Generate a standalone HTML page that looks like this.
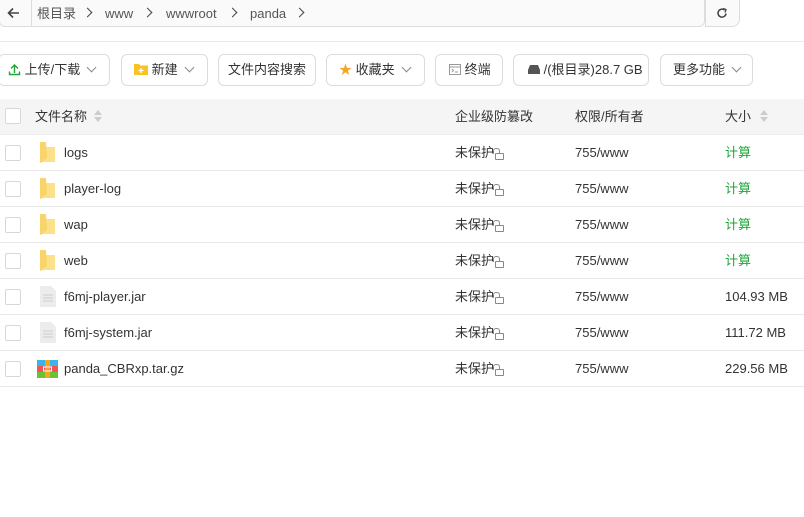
<!DOCTYPE html>
<html><head><meta charset="utf-8"><style>
*{box-sizing:border-box;margin:0;padding:0}
body{width:804px;height:517px;background:#fff;font-family:"Liberation Sans","Noto Sans CJK SC",sans-serif;font-size:13px;color:#333;position:relative;overflow:hidden}
.abs{position:absolute}
.bc{left:-1px;top:0;width:706px;height:27px;border:1px solid #dcdcdc;border-top:none;border-radius:0 0 6px 6px;background:#fafafa}
.rf{left:705px;top:0;width:35px;height:27px;border:1px solid #dcdcdc;border-top:none;border-radius:0 0 8px 0;background:#fafafa}
.t{position:absolute;white-space:nowrap;line-height:36px;top:0}
.btn{position:absolute;top:54px;height:32px;border:1px solid #dcdcdc;border-radius:6px;background:#fff;font-size:13px;line-height:30px;white-space:nowrap}
.chev{display:inline-block;width:7px;height:7px;border-right:1.2px solid #888;border-bottom:1.2px solid #888;transform:rotate(45deg);margin-left:8px;position:relative;top:-3px}
.row{position:absolute;left:0;width:804px;height:36px;border-bottom:1px solid #e8e8e8}
.cb{position:absolute;left:5px;top:10px;width:16px;height:16px;border:1px solid #d8d8d8;border-radius:2px;background:#fff}
.crumb{position:absolute;top:0;line-height:27px;font-size:13px;color:#555}
.gt{position:absolute;top:9px;width:7px;height:7px;border-right:1.5px solid #444;border-top:1.5px solid #444;transform:rotate(45deg)}
.lock{display:inline-block;width:9px;height:7px;border:1px solid #888;border-radius:1px;position:relative;top:3px;margin-left:1px}
.lock:before{content:"";position:absolute;left:-3px;top:-6px;width:5px;height:5px;border:1px solid #888;border-bottom:none;border-radius:3px 3px 0 0}
.sort{position:absolute;width:0;height:0;border-left:4px solid transparent;border-right:4px solid transparent}
</style></head><body>
<div class="abs bc"></div>
<div class="abs rf"></div>
<div class="abs" style="left:31px;top:0;width:1px;height:27px;background:#dcdcdc"></div>
<svg class="abs" style="left:7px;top:7px" width="13" height="12" viewBox="0 0 13 12"><path d="M12 6H2M6 1.5L1.5 6 6 10.5" stroke="#444" stroke-width="1.6" fill="none"/></svg>
<span class="crumb" style="left:37px">根目录</span><div class="gt" style="left:84px"></div>
<span class="crumb" style="left:105px">www</span><div class="gt" style="left:144px"></div>
<span class="crumb" style="left:166px">wwwroot</span><div class="gt" style="left:229px"></div>
<span class="crumb" style="left:250px">panda</span><div class="gt" style="left:296px"></div>
<svg class="abs" style="left:716px;top:7px" width="12" height="12" viewBox="0 0 12 12"><path d="M10 6.5A4 4 0 1 1 8.5 3" stroke="#444" stroke-width="1.5" fill="none"/><path d="M7 1.5L10 2.5 9 5.5" stroke="#444" stroke-width="1.3" fill="none"/></svg>
<div class="abs" style="left:0;top:41px;width:804px;height:1px;background:#eaeaea"></div>

<div class="btn" style="left:-2px;width:112px;padding-left:9px"><svg width="13" height="13" viewBox="0 0 13 13" style="vertical-align:-2px"><path d="M6.5 10V2M3 5.5L6.5 2 10 5.5M1.5 8.5v3h10v-3" stroke="#20a53a" stroke-width="1.4" fill="none"/></svg> 上传/下载<span class="chev"></span></div>
<div class="btn" style="left:121px;width:87px;padding-left:12px"><svg width="14" height="12" viewBox="0 0 14 12" style="vertical-align:-1px"><path d="M0 1h5l1.5 1.5H14V12H0z" fill="#f7c325"/><path d="M7 5v5M4.5 7.5h5" stroke="#fff" stroke-width="1.3"/></svg> 新建<span class="chev"></span></div>
<div class="btn" style="left:218px;width:98px;text-align:center">文件内容搜索</div>
<div class="btn" style="left:326px;width:99px;padding-left:12px"><span style="color:#f5a623">★</span> 收藏夹<span class="chev"></span></div>
<div class="btn" style="left:435px;width:68px;padding-left:13px"><svg width="12" height="11" viewBox="0 0 12 11" style="vertical-align:-1px"><rect x=".5" y=".5" width="11" height="10" fill="none" stroke="#999"/><path d="M.5 3h11M3 5l1.5 1.5L3 8M6 8h3" stroke="#999" fill="none"/></svg> 终端</div>
<div class="btn" style="left:513px;width:136px;padding-left:14px"><svg width="12" height="9" viewBox="0 0 12 9" style="vertical-align:0"><path d="M2 0h8l2 5v4H0V5z" fill="#555"/></svg> /(根目录)28.7 GB</div>
<div class="btn" style="left:660px;width:93px;padding-left:12px">更多功能<span class="chev"></span></div>

<div class="abs" style="left:0;top:99px;width:804px;height:36px;background:#f5f5f5;border-bottom:1px solid #eee">
<div class="cb" style="top:9px"></div>
<span class="t" style="left:35px">文件名称</span>
<div class="sort" style="left:94px;top:11px;border-bottom:5px solid #ccc"></div><div class="sort" style="left:94px;top:18px;border-top:5px solid #ccc"></div>
<span class="t" style="left:455px">企业级防篡改</span>
<span class="t" style="left:575px">权限/所有者</span>
<span class="t" style="left:725px">大小</span>
<div class="sort" style="left:760px;top:11px;border-bottom:5px solid #ccc"></div><div class="sort" style="left:760px;top:18px;border-top:5px solid #ccc"></div>
</div>

<div class="row" style="top:135px"><div class="cb"></div><svg class="abs" style="left:39px;top:7px" width="17" height="21" viewBox="0 0 17 21"><path d="M1 0h6v5h9v15H3L1 21z" fill="#fde08a"/><path d="M1 0h6l1 16-5 4-2 1z" fill="#f8d46a"/></svg><span class="t" style="left:64px">logs</span><span class="t" style="left:455px">未保护<span class="lock"></span></span><span class="t" style="left:575px">755/www</span><span class="t" style="left:725px;color:#20a53a">计算</span></div>
<div class="row" style="top:171px"><div class="cb"></div><svg class="abs" style="left:39px;top:7px" width="17" height="21" viewBox="0 0 17 21"><path d="M1 0h6v5h9v15H3L1 21z" fill="#fde08a"/><path d="M1 0h6l1 16-5 4-2 1z" fill="#f8d46a"/></svg><span class="t" style="left:64px">player-log</span><span class="t" style="left:455px">未保护<span class="lock"></span></span><span class="t" style="left:575px">755/www</span><span class="t" style="left:725px;color:#20a53a">计算</span></div>
<div class="row" style="top:207px"><div class="cb"></div><svg class="abs" style="left:39px;top:7px" width="17" height="21" viewBox="0 0 17 21"><path d="M1 0h6v5h9v15H3L1 21z" fill="#fde08a"/><path d="M1 0h6l1 16-5 4-2 1z" fill="#f8d46a"/></svg><span class="t" style="left:64px">wap</span><span class="t" style="left:455px">未保护<span class="lock"></span></span><span class="t" style="left:575px">755/www</span><span class="t" style="left:725px;color:#20a53a">计算</span></div>
<div class="row" style="top:243px"><div class="cb"></div><svg class="abs" style="left:39px;top:7px" width="17" height="21" viewBox="0 0 17 21"><path d="M1 0h6v5h9v15H3L1 21z" fill="#fde08a"/><path d="M1 0h6l1 16-5 4-2 1z" fill="#f8d46a"/></svg><span class="t" style="left:64px">web</span><span class="t" style="left:455px">未保护<span class="lock"></span></span><span class="t" style="left:575px">755/www</span><span class="t" style="left:725px;color:#20a53a">计算</span></div>
<div class="row" style="top:279px"><div class="cb"></div><svg class="abs" style="left:40px;top:7px" width="16" height="21" viewBox="0 0 16 21"><path d="M0 0h11l5 5v16H0z" fill="#ececec"/><path d="M3 9h10M3 12h10M3 15h10" stroke="#ccc"/></svg><span class="t" style="left:64px">f6mj-player.jar</span><span class="t" style="left:455px">未保护<span class="lock"></span></span><span class="t" style="left:575px">755/www</span><span class="t" style="left:725px">104.93 MB</span></div>
<div class="row" style="top:315px"><div class="cb"></div><svg class="abs" style="left:40px;top:7px" width="16" height="21" viewBox="0 0 16 21"><path d="M0 0h11l5 5v16H0z" fill="#ececec"/><path d="M3 9h10M3 12h10M3 15h10" stroke="#ccc"/></svg><span class="t" style="left:64px">f6mj-system.jar</span><span class="t" style="left:455px">未保护<span class="lock"></span></span><span class="t" style="left:575px">755/www</span><span class="t" style="left:725px">111.72 MB</span></div>
<div class="row" style="top:351px"><div class="cb"></div><svg class="abs" style="left:37px;top:9px" width="21" height="18" viewBox="0 0 21 18"><rect width="21" height="6" fill="#3cb4e8"/><rect y="6" width="21" height="6" fill="#f2545b"/><rect y="12" width="21" height="6" fill="#6cc12e"/><rect x="8" width="5" height="18" fill="#f5a623"/><rect x="6.5" y="7" width="8" height="4" fill="none" stroke="#fff"/></svg><span class="t" style="left:64px">panda_CBRxp.tar.gz</span><span class="t" style="left:455px">未保护<span class="lock"></span></span><span class="t" style="left:575px">755/www</span><span class="t" style="left:725px">229.56 MB</span></div>
</body></html>
